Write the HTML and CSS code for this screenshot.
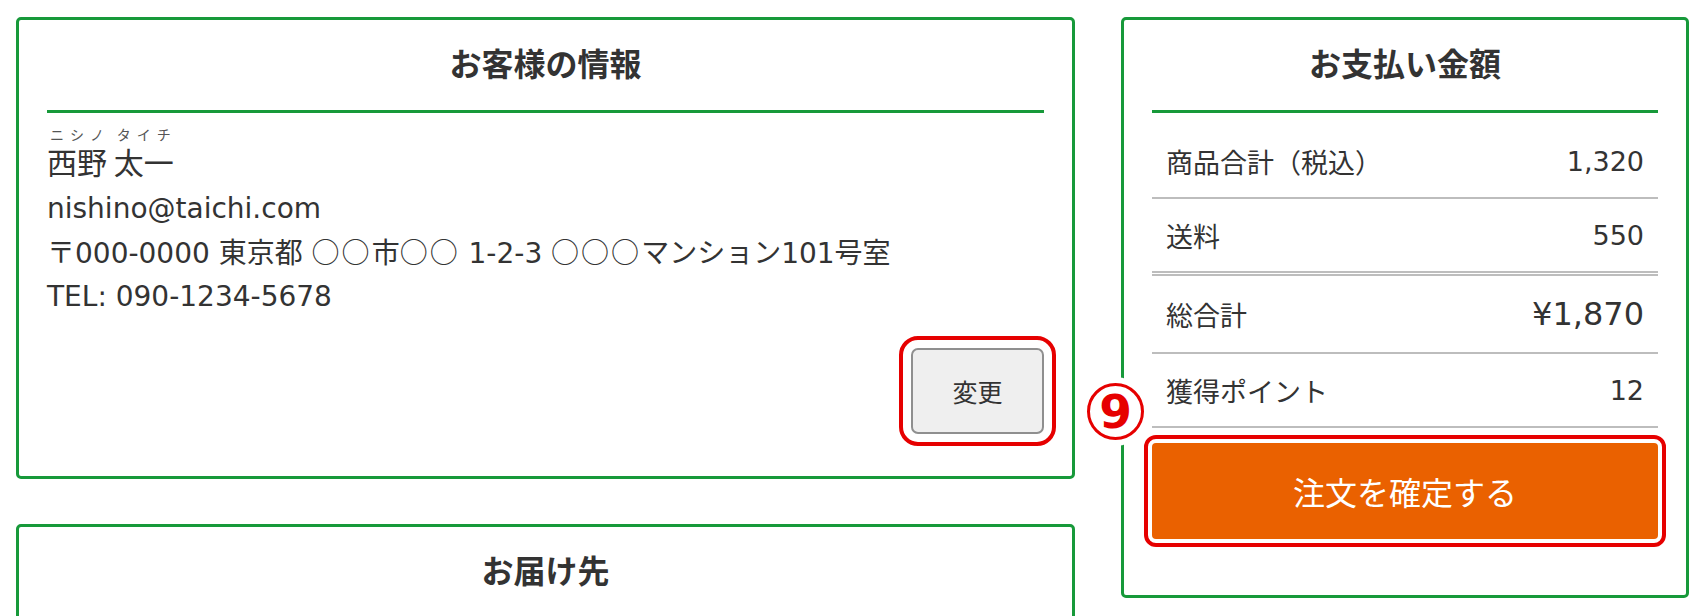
FILE: index.html
```html
<!DOCTYPE html>
<html lang="ja">
<head>
    <meta charset="UTF-8">
    <meta name="viewport" content="width=device-width, initial-scale=1.0">
    <title>ご注文内容の確認</title>
    <link rel="stylesheet" href="styles.css">
</head>
<body>
    <div class="checkout">
        <div class="main-col">
            <section class="box">
                <h2>お客様の情報</h2>
                <div class="customer">
                    <p class="name"><ruby>西野<rt>ニシノ</rt></ruby> <ruby>太一<rt>タイチ</rt></ruby></p>
                    <p>nishino@taichi.com</p>
                    <p>〒000-0000 東京都 <span class="ja">○○</span>市<span class="ja">○○</span> 1-2-3 <span class="ja">○○○</span>マンション101号室</p>
                    <p>TEL: 090-1234-5678</p>
                </div>
                <div class="actions">
                    <button class="btn-change">変更</button>
                </div>
            </section>

            <section class="box">
                <h2>お届け先</h2>
                <div class="customer">
                    <p class="name"><ruby>西野<rt>ニシノ</rt></ruby> <ruby>太一<rt>タイチ</rt></ruby></p>
                    <p>〒000-0000 東京都 <span class="ja">○○</span>市<span class="ja">○○</span> 1-2-3 <span class="ja">○○○</span>マンション101号室</p>
                    <p>TEL: 090-1234-5678</p>
                </div>
            </section>
        </div>

        <aside class="box summary">
            <h2>お支払い金額</h2>
            <div class="amounts">
                <div class="row">
                    <span>商品合計（税込）</span>
                    <span>1,320</span>
                </div>
                <div class="row subtotal">
                    <span>送料</span>
                    <span>550</span>
                </div>
                <div class="row total">
                    <span>総合計</span>
                    <span class="total-value">¥1,870</span>
                </div>
                <div class="row">
                    <span>獲得ポイント</span>
                    <span>12</span>
                </div>
            </div>
            <div class="confirm">
                <span class="step">9</span>
                <button class="btn-order">注文を確定する</button>
            </div>
        </aside>
    </div>
</body>
</html>
```

FILE: styles.css
```css
html, body {
    overflow: hidden;
}
body {
    margin: 0;
    background: #fff;
    color: #333;
    font-family: "DejaVu Sans", "Noto Sans CJK JP", sans-serif;
}
.ja {
    font-family: "Noto Sans CJK JP", sans-serif;
    letter-spacing: 2px;
}
.checkout {
    display: grid;
    grid-template-columns: 1fr 568px;
    gap: 46px;
    align-items: start;
    padding: 17px 17px 0 16px;
}
.main-col {
    display: flex;
    flex-direction: column;
    gap: 45px;
}
.box {
    border: 3px solid #17993a;
    border-radius: 5px;
    padding: 0 28px 42px;
    background: #fff;
}
.box h2 {
    margin: 0;
    padding: 18px 0 24px;
    font-family: "Noto Sans CJK JP", sans-serif;
    font-size: 32px;
    line-height: 48px;
    font-weight: bold;
    text-align: center;
    border-bottom: 3px solid #17993a;
}
.customer {
    font-size: 28px;
    line-height: 43px;
}
.customer p {
    margin: 0;
}
.customer .name {
    font-family: "Noto Sans CJK JP", sans-serif;
    font-size: 30px;
    line-height: 44px;
    padding-top: 26px;
    margin-bottom: 4px;
}
.customer rt {
    position: relative;
    top: -5px;
    font-size: 14px;
    line-height: 1;
    color: #555;
}
.actions {
    display: flex;
    justify-content: flex-end;
    margin-top: 30px;
}
.btn-change {
    width: 133px;
    height: 86px;
    border: 2px solid #8f8f8f;
    border-radius: 7px;
    background: #efefef;
    color: #333;
    font-family: "Noto Sans CJK JP", sans-serif;
    font-size: 25px;
    cursor: pointer;
    outline: 4px solid #e60000;
    outline-offset: 8px;
}
.summary {
    padding-bottom: 56px;
}
.amounts {
    margin-top: 12px;
}
.row {
    display: flex;
    justify-content: space-between;
    align-items: center;
    min-height: 72px;
    padding: 0 14px;
    font-size: 27px;
    border-bottom: 2px solid #bdbdbd;
}
.row.subtotal {
    border-bottom: 5px double #bdbdbd;
}
.row.total {
    min-height: 76px;
}
.total-value {
    font-size: 32px;
}
.confirm {
    position: relative;
    margin-top: 15px;
}
.btn-order {
    display: block;
    width: 100%;
    height: 96px;
    border: none;
    border-radius: 4px;
    background: #ea6100;
    color: #fff;
    font-family: "Noto Sans CJK JP", sans-serif;
    font-size: 32px;
    cursor: pointer;
    outline: 4px solid #e60000;
    outline-offset: 4px;
}
.step {
    position: absolute;
    top: -60px;
    left: -65px;
    width: 57px;
    height: 57px;
    box-sizing: border-box;
    border: 3px solid #e60000;
    border-radius: 50%;
    background: #fff;
    box-shadow: 0 0 0 6px #fff;
    color: #e60000;
    font-family: "DejaVu Sans", sans-serif;
    font-size: 47px;
    font-weight: bold;
    line-height: 51px;
    text-align: center;
}
```
